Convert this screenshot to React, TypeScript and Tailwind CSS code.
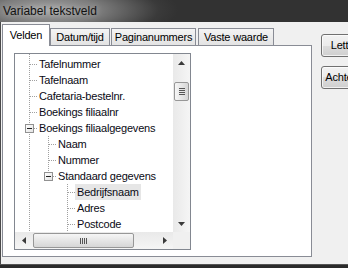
import React from "react";

type TreeRow = {
  label: string;
  level: number;
  guides: boolean[];
  last?: boolean;
  open?: boolean;
  selected?: boolean;
};

const rows: TreeRow[] = [
  { label: "Tafelnummer", level: 0, guides: [] },
  { label: "Tafelnaam", level: 0, guides: [] },
  { label: "Cafetaria-bestelnr.", level: 0, guides: [] },
  { label: "Boekings filiaalnr", level: 0, guides: [] },
  { label: "Boekings filiaalgegevens", level: 0, guides: [], open: true },
  { label: "Naam", level: 1, guides: [true] },
  { label: "Nummer", level: 1, guides: [true] },
  { label: "Standaard gegevens", level: 1, guides: [true], last: true, open: true },
  { label: "Bedrijfsnaam", level: 2, guides: [true, false], selected: true },
  { label: "Adres", level: 2, guides: [true, false] },
  { label: "Postcode", level: 2, guides: [true, false] },
];

const LINE = "#a0a0a0";

function Guide({ on, h = 16 }: { on: boolean; h?: number }) {
  return (
    <svg width={19} height={h} className="shrink-0 block">
      {on && (
        <line x1={9.5} y1={0} x2={9.5} y2={h} stroke={LINE} strokeDasharray="1 1" shapeRendering="crispEdges" />
      )}
    </svg>
  );
}

function Connector({ last, open }: { last?: boolean; open?: boolean }) {
  return (
    <svg width={19} height={16} className="shrink-0 block">
      <line x1={9.5} y1={0} x2={9.5} y2={last ? 8 : 16} stroke={LINE} strokeDasharray="1 1" shapeRendering="crispEdges" />
      <line x1={open ? 14 : 10} y1={8.5} x2={18} y2={8.5} stroke={LINE} strokeDasharray="1 1" shapeRendering="crispEdges" />
      {open && (
        <>
          <defs>
            <linearGradient id="bx" x1="0" y1="0" x2="1" y2="1">
              <stop offset="0" stopColor="#ffffff" />
              <stop offset="1" stopColor="#e2e2e2" />
            </linearGradient>
          </defs>
          <rect x={5.5} y={4.5} width={8} height={8} fill="url(#bx)" stroke="#919191" shapeRendering="crispEdges" />
          <rect x={7} y={8} width={5} height={1} fill="#222" />
        </>
      )}
    </svg>
  );
}

function Arrow({ dir }: { dir: "up" | "down" | "left" | "right" }) {
  const pts = {
    up: "0,4 3.5,0 7,4",
    down: "0,0 7,0 3.5,4",
    left: "4,0 4,7 0,3.5",
    right: "0,0 4,3.5 0,7",
  }[dir];
  const vert = dir === "up" || dir === "down";
  return (
    <svg width={vert ? 7 : 4} height={vert ? 4 : 7} className="block">
      <polygon points={pts} fill="#3a3a3a" />
    </svg>
  );
}

function Tree() {
  return (
    <div className="w-[177px] h-[197px] border border-[#828790] flex flex-col bg-white">
      <div className="flex h-[178px]">
        <div className="w-[158px] overflow-hidden text-[11px] tracking-[-0.2px] text-[#0a0a14]">
          <div className="flex pl-[5px] h-[2px] overflow-hidden">
            <Guide on h={2} />
          </div>
          {rows.map((r) => (
            <div key={r.label} className="flex pl-[5px] h-[16px] items-stretch">
              {r.guides.map((g, i) => (
                <Guide key={i} on={g} />
              ))}
              <Connector last={r.last} open={r.open} />
              <span
                className={`-ml-[2px] px-[2px] leading-[16px] whitespace-nowrap ${
                  r.selected ? "bg-[#e6e6e6]" : ""
                }`}
              >
                {r.label}
              </span>
            </div>
          ))}
        </div>
        <div className="w-[17px] flex flex-col bg-linear-to-r from-[#e9e9e9] to-[#f5f5f5]">
          <div className="h-[17px] flex items-center justify-center">
            <Arrow dir="up" />
          </div>
          <div className="mt-[11px] ml-px w-[15px] h-[19px] rounded-[2px] border border-[#979797] bg-linear-to-r from-[#f6f6f6] to-[#d6d6d6] flex flex-col items-center justify-center gap-px">
            <div className="w-[6px] h-px bg-[#555]" />
            <div className="w-[6px] h-px bg-[#555]" />
            <div className="w-[6px] h-px bg-[#555]" />
            <div className="w-[6px] h-px bg-[#555]" />
          </div>
          <div className="flex-1" />
          <div className="h-[17px] flex items-center justify-center">
            <Arrow dir="down" />
          </div>
        </div>
      </div>
      <div className="flex h-[17px]">
        <div className="w-[158px] flex bg-linear-to-b from-[#e9e9e9] to-[#f5f5f5]">
          <div className="w-[17px] flex items-center justify-center">
            <Arrow dir="left" />
          </div>
          <div className="ml-px my-px w-[101px] rounded-[2px] border border-[#979797] bg-linear-to-b from-[#f6f6f6] to-[#d6d6d6] flex items-center justify-center gap-px">
            <div className="w-px h-[6px] bg-[#555]" />
            <div className="w-px h-[6px] bg-[#555]" />
            <div className="w-px h-[6px] bg-[#555]" />
            <div className="w-px h-[6px] bg-[#555]" />
          </div>
          <div className="flex-1" />
          <div className="w-[17px] flex items-center justify-center">
            <Arrow dir="right" />
          </div>
        </div>
        <div className="w-[17px] bg-[#f0f0f0]" />
      </div>
    </div>
  );
}

const tabs = [
  { label: "Datum/tijd", cls: "w-[60px]" },
  { label: "Paginanummers", cls: "w-[85px] ml-px" },
  { label: "Vaste waarde", cls: "w-[76px] ml-[2px]" },
];

export default function App() {
  return (
    <div className="w-[348px] h-[268px] overflow-hidden flex flex-col bg-[#2e2e2e] font-['Liberation_Sans',Arial,sans-serif] text-black">
      <div className="h-[22px] shrink-0 flex items-center pl-[3px] bg-[radial-gradient(ellipse_130px_34px_at_48px_10px,#a6a6a6_0%,#7c7c7c_40%,#3a3a3a_85%,#323232_100%)]">
        <span className="text-[12px] text-[#111] [text-shadow:0_0_6px_rgba(255,255,255,0.45)]">
          Variabel tekstveld
        </span>
      </div>

      <div className="h-[242px] shrink-0 flex bg-[#f0f0f0] border-l border-[#4a4a4a]">
        <div className="shrink-0 ml-px pt-[2px] w-[310px] flex flex-col">
          <div className="flex items-end h-[21px] text-[11px] tracking-[-0.2px]">
            <div className="relative z-10 w-[48px] h-[22px] -mb-px bg-white border border-b-0 border-[#898c95] flex items-center justify-center">
              Velden
            </div>
            {tabs.map((t) => (
              <div
                key={t.label}
                className={`${t.cls} h-[17px] border border-b-0 border-[#898c95] bg-linear-to-b from-[#f4f4f4] to-[#e3e3e3] flex items-center justify-center whitespace-nowrap`}
              >
                {t.label}
              </div>
            ))}
          </div>
          <div className="h-[212px] border border-[#898c95] bg-white pl-[11px] pt-[7px]">
            <Tree />
          </div>
        </div>

        <div className="shrink-0 ml-[9px] pt-[12px] flex flex-col gap-[9px] text-[11px] tracking-[-0.2px]">
          {["Lettertype...", "Achtergrond..."].map((b) => (
            <div
              key={b}
              className="w-[75px] h-[23px] rounded-[3px] border border-[#707070] bg-[linear-gradient(to_bottom,#f2f2f2_0%,#ebebeb_50%,#dddddd_50%,#cfcfcf_100%)] shadow-[inset_0_0_0_1px_rgba(255,255,255,0.7)] flex items-center justify-center whitespace-nowrap"
            >
              {b}
            </div>
          ))}
        </div>
      </div>

      <div className="h-[4px] shrink-0 border-t border-[#555] bg-[#2b2b2b]" />
    </div>
  );
}
